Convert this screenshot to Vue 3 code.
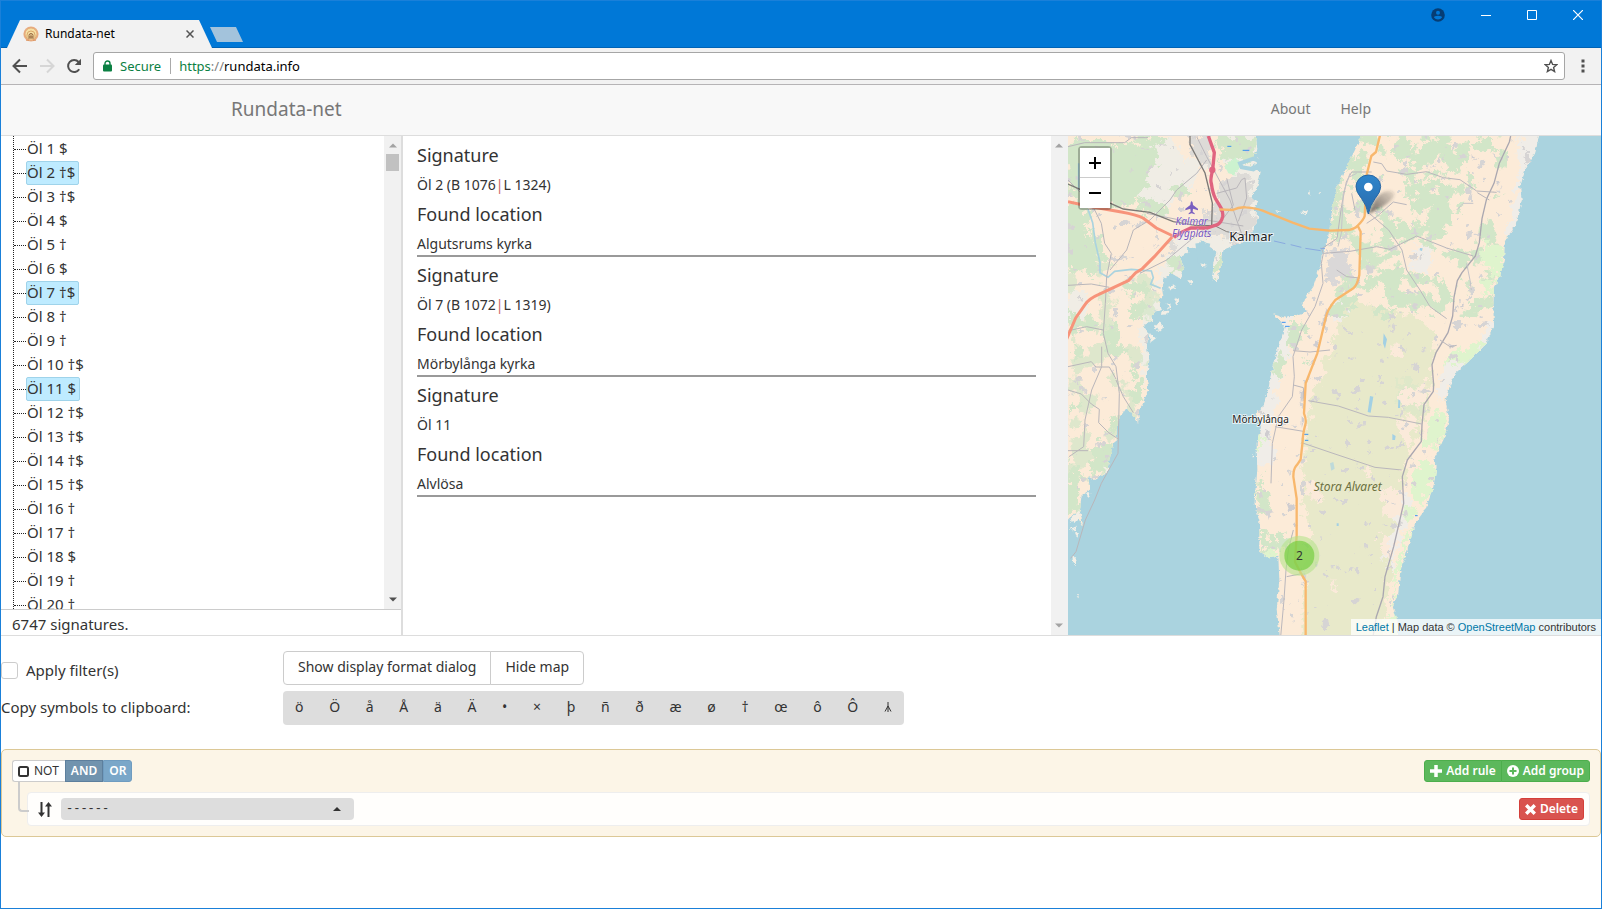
<script setup>
import { ref } from 'vue'

const marks = ['$', '†$', '†$', '$', '†', '$', '†$', '†', '†', '†$', '$', '†$', '†$', '†$', '†$', '†', '†', '$', '†', '†']
const chosen = ref([2, 7, 11])
const signatures = marks.map((mark, i) => ({ id: i + 1, label: `Öl ${i + 1} ${mark}` }))

const records = [
  { signature: 'Öl 2 (B 1076', alias: 'L 1324)', place: 'Algutsrums kyrka' },
  { signature: 'Öl 7 (B 1072', alias: 'L 1319)', place: 'Mörbylånga kyrka' },
  { signature: 'Öl 11', alias: '', place: 'Alvlösa' }
]

const symbols = ['ö', 'Ö', 'å', 'Å', 'ä', 'Ä', '•', '×', 'þ', 'ñ', 'ð', 'æ', 'ø', '†', 'œ', 'ô', 'Ô']
const applyFilters = ref(false)
const field = ref('')

function toggle(id) {
  chosen.value = chosen.value.includes(id) ? chosen.value.filter((n) => n !== id) : [...chosen.value, id]
}
</script>

<template>
  <div class="window">
    <header class="titlebar">
      <div class="tab">
        <svg class="favicon" viewBox="0 0 16 16" aria-hidden="true">
          <circle cx="8" cy="8" r="7.600" fill="#e9ae82" />
          <circle cx="8" cy="8" r="6" fill="#f6e0a4" stroke="#dfa070" stroke-width=".7" />
          <path d="M4 12.500V9a4 4 0 0 1 8 0v3.500" fill="none" stroke="#d9a86c" stroke-width="1" />
          <path d="M6 13v-3.500a2 2 0 0 1 4 0V13M8 8.500V13M6 11h4" fill="none" stroke="#94643c" stroke-width="1" />
          <path d="M3 14.200h3M10 14.200h3" stroke="#d9925f" />
        </svg>
        <span class="tab-title">Rundata-net</span>
        <button class="plain tab-close" aria-label="Close tab">
          <svg width="8" height="8" viewBox="0 0 8 8"><path d="M.5 .5l7 7M7.500 .5l-7 7" stroke="#555" stroke-width="1.500" /></svg>
        </button>
      </div>
      <button class="plain new-tab" aria-label="New tab"></button>
      <div class="window-controls">
        <button class="plain profile" aria-label="Profile">
          <svg width="14" height="14" viewBox="0 0 14 14"><circle cx="7" cy="7" r="6.800" fill="#063d74" /><circle cx="7" cy="4.700" r="2" fill="#0078d7" /><path d="M3 9.500q0-1.700 4-1.700t4 1.700Q9.500 11.500 7 11.500T3 9.500" fill="#0078d7" /></svg>
        </button>
        <button class="plain" aria-label="Minimize">
          <svg width="10" height="10" viewBox="0 0 10 10"><path d="M0 5.500h10" stroke="#fff" /></svg>
        </button>
        <button class="plain" aria-label="Maximize">
          <svg width="10" height="10" viewBox="0 0 10 10"><path d="M.5 .5h9v9h-9z" fill="none" stroke="#fff" /></svg>
        </button>
        <button class="plain" aria-label="Close">
          <svg width="10" height="10" viewBox="0 0 10 10"><path d="M0 0l10 10M10 0L0 10" stroke="#fff" stroke-width="1.200" /></svg>
        </button>
      </div>
    </header>

    <div class="toolbar">
      <button class="plain" aria-label="Back">
        <svg width="16" height="16" viewBox="0 0 16 16"><path d="M15 8H2M8 1.500L1.500 8 8 14.500" fill="none" stroke="#505050" stroke-width="2" /></svg>
      </button>
      <button class="plain" aria-label="Forward">
        <svg width="16" height="16" viewBox="0 0 16 16"><path d="M1 8h13M8 1.500L14.500 8 8 14.500" fill="none" stroke="#d6d6d6" stroke-width="2" /></svg>
      </button>
      <button class="plain" aria-label="Reload">
        <svg width="16" height="16" viewBox="0 0 16 16"><path d="M13.200 11.200A6 6 0 1 1 12.600 4" fill="none" stroke="#505050" stroke-width="2" /><path d="M15 .8v6.200H8.800z" fill="#505050" /></svg>
      </button>
      <div class="omnibox">
        <svg width="9" height="12" viewBox="0 0 9 12" aria-hidden="true"><path d="M2 5V3.500a2.500 2.500 0 0 1 5 0V5" fill="none" stroke="#0b8043" stroke-width="1.400" /><rect y="4.500" width="9" height="7" rx="1" fill="#0b8043" /></svg>
        <span class="secure">Secure</span>
        <span class="url"><span class="scheme">https</span><span class="slashes">://</span>rundata.info</span>
        <button class="plain star" aria-label="Bookmark this page">
          <svg width="14" height="14" viewBox="0 0 14 14"><path d="M7 1.500l1.600 3.900 4.200.3-3.200 2.700 1 4.100L7 10.300l-3.600 2.200 1-4.100L1.200 5.700l4.200-.3z" fill="none" stroke="#505050" stroke-width="1.400" /></svg>
        </button>
      </div>
      <button class="plain" aria-label="Menu">
        <svg width="4" height="14" viewBox="0 0 4 14"><path d="M.5 .5h3v3h-3zM.5 5.500h3v3h-3zM.5 10.500h3v3h-3z" fill="#505050" /></svg>
      </button>
    </div>

    <nav class="navbar">
      <div class="container">
        <a class="brand" href="#">Rundata-net</a>
        <a class="nav-link" href="#about">About</a>
        <a class="nav-link" href="#help">Help</a>
      </div>
    </nav>

    <main>
      <section class="panels">
        <div class="tree-panel">
          <div class="scroll-view">
            <ul class="tree">
              <li v-for="s in signatures" :key="s.id">
                <button class="plain node" :class="{ selected: chosen.includes(s.id) }" @click="toggle(s.id)">{{ s.label }}</button>
              </li>
            </ul>
            <div class="scrollbar" aria-hidden="true">
              <svg width="8" height="5" viewBox="0 0 8 5"><path d="M0 4.500L4 .5l4 4z" fill="#a3a3a3" /></svg>
              <span class="thumb"></span>
              <svg class="down" width="8" height="5" viewBox="0 0 8 5"><path d="M0 .5h8l-4 4z" fill="#505050" /></svg>
            </div>
          </div>
          <p class="status">6747 signatures.</p>
        </div>

        <div class="details-panel">
          <div class="records">
            <article v-for="r in records" :key="r.place" class="record">
              <h4>Signature</h4>
              <p>{{ r.signature }}<template v-if="r.alias"><span class="bar">|</span>{{ r.alias }}</template></p>
              <h4>Found location</h4>
              <p>{{ r.place }}</p>
            </article>
          </div>
          <div class="scrollbar" aria-hidden="true">
            <svg width="8" height="5" viewBox="0 0 8 5"><path d="M0 4.500L4 .5l4 4z" fill="#a3a3a3" /></svg>
            <svg class="down" width="8" height="5" viewBox="0 0 8 5"><path d="M0 .5h8l-4 4z" fill="#a3a3a3" /></svg>
          </div>
        </div>

        <div class="map">
          <svg class="tiles" viewBox="144 18 1600 1497" preserveAspectRatio="xMidYMid slice" role="img" aria-label="Map of Kalmar and southern Öland">
            <defs>
              <filter id="coast" x="-5%" y="-5%" width="110%" height="110%">
                <feTurbulence type="fractalNoise" baseFrequency=".09" numOctaves="3" seed="4" />
                <feDisplacementMap in="SourceGraphic" scale="13" xChannelSelector="R" yChannelSelector="G" />
              </filter>
              <filter id="patch" x="-5%" y="-5%" width="110%" height="110%">
                <feTurbulence type="fractalNoise" baseFrequency=".04" numOctaves="4" seed="9" />
                <feDisplacementMap in="SourceGraphic" scale="60" xChannelSelector="R" yChannelSelector="G" />
              </filter>
              <filter id="woods" x="0" y="0" width="100%" height="100%" color-interpolation-filters="sRGB">
                <feTurbulence type="fractalNoise" baseFrequency=".014" numOctaves="5" seed="12" />
                <feColorMatrix values="0 0 0 0 .824  0 0 0 0 .902  0 0 0 0 .784  30 0 0 0 -17.300" />
              </filter>
              <filter id="clearings" x="0" y="0" width="100%" height="100%" color-interpolation-filters="sRGB">
                <feTurbulence type="fractalNoise" baseFrequency=".022" numOctaves="4" seed="31" />
                <feColorMatrix values="0 0 0 0 .988  0 0 0 0 .922  0 0 0 0 .847  30 0 0 0 -17.500" />
              </filter>
              <filter id="hamlets" x="0" y="0" width="100%" height="100%" color-interpolation-filters="sRGB">
                <feTurbulence type="fractalNoise" baseFrequency=".03" numOctaves="3" seed="5" />
                <feColorMatrix values="0 0 0 0 .84  0 0 0 0 .83  0 0 0 0 .83  30 0 0 0 -21" />
              </filter>
              <filter id="soft"><feGaussianBlur stdDeviation="5" /></filter>
              <linearGradient id="pin" x1="0" y1="0" x2="0" y2="1"><stop offset="0" stop-color="#2e85cb" /><stop offset="1" stop-color="#2a6bac" /></linearGradient>
              <linearGradient id="shade" x1="0" y1="1" x2="1" y2="0"><stop offset="0" stop-color="#333" stop-opacity=".75" /><stop offset="1" stop-color="#333" stop-opacity=".1" /></linearGradient>
              <clipPath id="mainland"><path d="M130 0H705L712 60 700 80 720 90 690 112 722 125 712 170 690 200 715 215 700 240 718 260 700 300 690 322 660 338 630 350 610 360 605 400 590 455 578 445 580 400 590 365 570 350 545 330 530 355 500 350 505 370 480 380 490 410 480 445 455 430 430 445 425 470 430 500 415 510 425 540 400 545 395 570 372 590 385 610 380 650 388 690 380 740 385 780 365 830 357 840 355 878 320 830 300 860 290 900 292 930 280 940 270 980 260 1030 225 1050 205 1040 210 1080 185 1095 180 1140 190 1190 165 1150 130 1180z" /></clipPath>
              <clipPath id="island"><path d="M1025 0L1022 18 1005 60 990 90 970 130 950 175 940 220 932 270 925 320 915 350 900 410 880 470 845 520 860 545 830 555 800 565 760 553 795 590 780 640 760 700 750 750 745 780 730 830 705 850 725 880 710 940 712 1020 703 1120 718 1170 718 1265 745 1285 775 1280 778 1350 770 1440 782 1540H1135L1132 1470 1118 1430 1135 1390 1140 1330 1165 1250 1185 1180 1215 1140 1240 1070 1250 1010 1240 990 1270 930 1287 870 1277 810 1295 750 1305 730 1340 700 1390 650 1422 590 1420 530 1422 470 1440 440 1452 390 1455 330 1485 290 1505 210 1500 170 1515 120 1545 70 1560 0z" /></clipPath>
            </defs>
            <rect x="-400" y="-400" width="2800" height="2400" fill="#aad3df" />

            <!-- mainland -->
            <g filter="url(#coast)">
              <g clip-path="url(#mainland)">
                <rect x="120" width="620" height="1250" fill="#fcebd8" />
                <g fill="#f0ede5" filter="url(#patch)">
                  <path d="M395 20h60l35 70 60 10-30 60-60 50-40 60-50-30-20-50 40-80z" />
                  <path d="M610 0h120v360H600l40-120z" />
                  <path d="M460 320h150l-10 130H430l-20 60-10-40z" />
                  <path d="M370 520h70l-30 150-30 100-20-100z" />
                  <path d="M150 480l60 20-20 60-60 10z" />
                </g>
                <rect x="120" y="400" width="300" height="850" filter="url(#woods)" opacity=".7" />
                <g fill="#d2e6c8" filter="url(#patch)">
                  <path d="M130 50L190 22 255 45 330 38 400 48 420 90 380 130 385 165 350 190 330 235 285 230 240 215 180 240 150 185z" />
                  <path d="M340 20l60-4 40 8-20 20-60 4z" />
                  <path d="M130 235l60-15 18 40-8 40 26 60 20 60-20 20-40-20-60 10z" />
                  <path d="M210 300l30 16 20 70-20 8-20-40z" />
                  <path d="M350 200l60 10 40 22-20 22-60-4z" />
                  <path d="M440 180l50-20 20 20-30 30z" />
                  <path d="M590 20l110 0 14 60-30 20-40-12-40 8z" />
                  <path d="M130 540l50 20 50 10 12 22-50 10-60-14z" />
                  <path d="M255 570l30 20 25 60-10 30-30-10-20-45z" />
                  <path d="M310 460l50-8 34 20-14 20-70 5z" />
                  <path d="M340 510l44 14-24 44-24-14z" />
                  <path d="M160 640l20 10 6 30-22 8z" />
                  <path d="M340 690l18 4-10 56-12-10z" />
                  <path d="M355 740l22 20-24 60-20-10z" />
                  <path d="M290 850l10 40-30 20-10-30z" />
                  <path d="M240 930l50 10-14 80-66 20 10-70z" />
                  <path d="M150 990l40 50-20 70-40 20z" />
                  <path d="M150 1100l30 20-4 26-40 6z" />
                  <path d="M430 400l60-20 10 24-40 24z" />
                  <path d="M590 380l20-20-8 66-20 20z" />
                  <path d="M144 830l40-4 4 14-44 8z" />
                </g>
                <path d="M615 110l30-30 18 24-18 30-20-4z" fill="#ccf2cf" />
                <g fill="#dddbd7" filter="url(#patch)">
                  <path d="M512 18l50 4 10 60-12 50-20-40-20-14z" />
                  <path d="M590 180l30-35 55-10 22 45-6 60 20 40-40 50-40 10-40-40-20-60 20-10z" />
                  <path d="M545 240l40 20 20 50-30 10-30-20z" />
                  <path d="M430 360l40-30 14 6-40 44z" />
                </g>
                <rect x="120" width="600" height="1250" filter="url(#hamlets)" />
              </g>
              <g fill="#f3efe6">
                <path d="M405 590l16-16 8 20-14 12zM425 545l20-4-2 12-20 2zM468 505l10 4-6 14-9-4zM445 470l20-4 3 8-20 5zM505 450l12 2-3 13zM388 610l20 15-16 12zM440 520l12 4-4 16z" />
                <path d="M148 1170l30-30 4 18-20 22zM150 1195l22-6-8 16zM165 1210l12-2-5 12zM158 1275l12 14-3 20-9-12zM195 1090l16 0-3 12zM250 1010l20 4-8 14zM170 1396l7 0-2 6z" />
                <path d="M765 240l15 2-4 6zM840 246l24-4-6 14-12-6zM862 190l8-6-2 10zM895 188l9-2-4 7zM540 400l20 5-8 8zM695 225l8 4-8 6zM697 975l8 3-6 6z" />
              </g>
            </g>
            <g fill="none" stroke="#aad3df" stroke-width="5">
              <path d="M204 238l14 40 8 60 14 60 0 30 24 14 20-18 50-6 60 5 6 20-8 20 30 12M176 100v80" />
              <path d="M660 100l40-14 30 12-30 20-35-6zM540 400l-8-60M555 380l10-40" stroke-width="12" />
            </g>
            <g fill="none" stroke="#b9b6ba" stroke-width="3">
              <path d="M144 150l70 70 30 60 10 60 20 30-14 70-4 80-6 90 14 60 24 40 10 80-4 180-50 90-20 50-28 60-28 95-16 20" />
              <path d="M144 466l70-4 54 10M250 600l-50-10-54 12M144 710l70-15 14 16 40 0 20 36M245 650v60l-30 70-20 90-4 80-44 30M144 780l40 12 30 30 24 16-2 40 30 30 30 20M144 962h60M288 750l22 50 30 48" />
              <path d="M270 420l50-60 20-60 50-30 60-60 20-30 60-50 30-40M360 430l80-40 60-50 60-50 40-10M380 250l130 26 60-4 100 16" />
              <path d="M560 80l70 130 20 60 18 50M590 190l60-16 15-25 10-5 5 60-25 70M620 145l20 80-30 40M530 20l30 60" />
              <path d="M144 50l50-12 120 0 20-15h50" />
            </g>
            <path d="M144 162l50 22M260 215l50 22 80 10 70 28 70 12h60M510 18v26l45 85 22 90-2 70" fill="none" stroke="#7b7976" stroke-width="4" />
            <path d="M580 285l40 20 60 10" fill="none" stroke="#85827f" stroke-width="3" />
            <g fill="none" stroke="#f7937a" stroke-width="9" stroke-linejoin="round">
              <path d="M144 215l70 15 90 16q45 8 65 18l40 30 50 24-56 62-36 36-20 12-22 24-90 42q-28 12-40 30l-28 40-30 70-8 30-15 32" />
            </g>
            <path d="M565 18l18 50-5 52q-8 30-4 40 4 30 12 45l18 30q6 14 4 25-4 18-16 24l-30 10-50 0-30 14-20 14" fill="none" stroke="#e0647f" stroke-width="10" stroke-linejoin="round" />
            <circle cx="577" cy="120" r="7" fill="none" stroke="#e0647f" stroke-width="5" />
            <circle cx="605" cy="240" r="6" fill="#e0647f" />

            <!-- island -->
            <g filter="url(#coast)">
              <g clip-path="url(#island)">
                <rect x="690" width="900" height="1550" fill="#fcebd8" />
                <g fill="#f0ede8" filter="url(#patch)">
                  <path d="M1500 0h100v80l-60 100-10 100-50 60-20-10 30-160z" />
                  <path d="M740 600l60-40 20 60-30 100-40 180 10 100-60 20z" />
                  <path d="M1420 560l20 20-50 100-100 70-20 60-20-10 20-90 100-60z" />
                  <path d="M1110 1090l70 20-40 120-50 180-20-30 30-160z" />
                  <path d="M950 510l70 50-30 20-50-10zM1150 370l80-30 20 40-40 60-40-20z" />
                </g>
                <rect x="930" width="530" height="560" filter="url(#woods)" />
                <path d="M985 510L1100 540 1210 565 1250 620 1245 690 1225 750 1230 830 1205 890 1160 990 1150 1060 1100 1130 1130 1180 1090 1260 1110 1330 1090 1530 850 1540 850 1400 870 1200 850 1130 850 940 880 800 920 700 955 590z" fill="#e8e9ca" filter="url(#patch)" />
                <g fill="#d2e6c8" filter="url(#patch)">
                  <path d="M1190 20l120 0 40 60-30 40-70 20-60 0-20-50z" />
                  <path d="M1110 20l50 0 20 70-40 10-30-40z" />
                  <path d="M1150 160l70-10 80 10 40 60-40 60-50 30-60-20-20-60z" />
                  <path d="M1090 280l60-10 100 50-20 20-70-10-40 50-40-20-10-60z" />
                  <path d="M1080 420l60-10 40 20 100 20 20 50-40 50-90-20-50 0-30-40-60-30z" />
                  <path d="M1020 60l20 30-10 60 30 10-20 30-40-10 0-80z" />
                  <path d="M1340 130l30 10-14 50-20-10zM1350 30l60-10 14 40-40 10z" />
                  <path d="M940 490l60 0 20 40-50 10zM1065 530l50 10-20 24-26-6z" />
                  <path d="M1350 500l60 10-10 30-50-4zM1320 430l36 20-30 24z" />
                  <path d="M820 550l40 40-30 70-28-20zM780 660l20 40-28 50-16-20zM850 680l16 20-14 14z" />
                  <path d="M720 1030l30 80-10 60-28-20zM720 1180l40 60 40-40 0 50-60 20-20-30z" />
                  <path d="M1120 750l60-4 40 90-30 30-50-40z" opacity=".4" />
                  <path d="M950 120l20 20-14 90-20-10zM935 260l30 0-8 70-20-4z" />
                </g>
                <rect x="1060" y="18" width="300" height="500" filter="url(#clearings)" />
                <g fill="#dff4cd" filter="url(#patch)">
                  <path d="M1390 330l70 20-20 90-50-30z" />
                  <path d="M1385 450l46 0-6 40-40-4z" />
                  <path d="M1290 660l110-20-50 50-80 20z" />
                  <path d="M1255 830l30 40-30 80-50-10z" />
                  <path d="M1205 980l50 20-20 80-20 50-40-40 10-60z" />
                  <path d="M1150 1130l50 10-30 30-20-10zM1165 1200l16-10-50 170-16-10zM1100 1460l30-10 10 70h-40zM1120 1370l16 0-16 60z" />
                  <path d="M708 900l20 20-10 40-10-10zM735 1265l40 5-20 22-20-6z" />
                </g>
                <g fill="#fbeada" filter="url(#patch)">
                  <path d="M1140 780l80-10-10 60-70-20zM1150 850l40 20-30 80-20-40zM1120 640l30 20-10 30-22-10zM1025 1020l30 0-8 20zM870 1050l40 50-10 20-40-30zM1090 1080l60 0-10 90-50-10zM1080 1210l40 10-10 60-30-10zM940 1350l14 10-8 30z" />
                </g>
                <rect x="700" width="880" height="1540" filter="url(#hamlets)" />
                <g fill="#dad8d8" filter="url(#patch)">
                  <path d="M922 375l50-25 20 50-26 40-30 20-20-30z" />
                  <path d="M955 400l40 20 15 24-36-8z" />
                </g>
                <g fill="#cfcdd0">
                  <path d="M920 535l8 14-16 40-8-8zM885 630l14 6-6 18-14-8zM1010 440l12 20-16 8zM1425 150l16 4-8 14zM1300 540l10-16 2 24z" />
                  <path d="M1355 70l14 20-14-4zM1320 530l12-10-4 18zM800 1120l24 8-2 14-14 2zM735 900l14 6-8 22zM820 1180l14 6-10 10zM1285 640l20 10-16 6zM842 780l10 14-10 26zM845 860l8 10-8 24zM1150 1060l14-6-4 20zM865 1050l10 4-8 8zM892 1104l12 0-6 10zM1100 1270l12-14-4 24z" />
                </g>
              </g>
            </g>
            <g fill="#a2d0e4">
              <path d="M1091 610l10 18-6 28-6-16zM1050 798l10 2-8 48-9-2zM1135 808l6 4-1 22-6 0zM1117 912l10 6-2 12-8 0zM950 1180l6 0 0 8h-6zM1200 354l8 1-2 8-7-2z" />
              <path d="M930 1000l10-4 4 20-10 6z" opacity=".6" />
            </g>
            <path d="M785 577h12M795 589h14M852 913h13M855 931h10M622 49h12M668 61h20M1185 1157h8" fill="none" stroke="#3b92f0" stroke-width="3" />

            <g fill="none" stroke="#bab7bc" stroke-width="3" stroke-linejoin="round">
              <path d="M1472 18l-4 18-30 64-16 60-22 46-14 60-8 72-12 40-40 50-14 24-10 50-4 56-14 50-36 60-12 36 5 60-1 20-28 40-6 60-2 50-42 56-15 50 4 80-30 130-26 90-6 60-20 60-10 60" stroke="#aaa7b0" stroke-width="4" />
              <path d="M1060 96l25 5 15 22 60 10 60-8 50 18 50 6 50 34 60 4M1372 188l36 22M1360 378l-80-24-90-36-80 40-40-8-80 14-80 6-5-14 46-30 14-100 14-70 16-30 60 0M1040 280l30-20 50-44 40 8M1036 240l70 60 40 60 14 60 40 60 30 50 50 36M910 370l-6 30 5 60-24 70-40 70-26 80 4 60-6 60-42 60-18 80-4 120M950 420l30 20 40 4M995 190l10 50M930 660l-60 6-50-4M1260 630l30 20 20-4" />
              <path d="M865 812l90 16 90 30 60 4 100 20M845 938l100 34 120 40 80 8M820 765l30 8 2 40M765 890l85 14M820 1200l-15 60-7 60-6 90-10 110M800 1340l40-8" />
              <path d="M990 130l-20 60-6 120-10 40M1010 130l-20 10M1340 400l10 50 4 30M1310 240l20-20 30 0" stroke="#c5c3c8" />
            </g>
            <path d="M762 333l34 8M812 344l32 8M856 355l46 7M915 356l-14-1" fill="none" stroke="#89aae0" stroke-width="3" />
            <g fill="none" stroke="#f8b76c" stroke-width="7" stroke-linejoin="round">
              <path d="M598 238l40 2q20-10 40-8 30 2 50 10l90 36 50 18 60 6 60-2q20-6 24-12 20-20 22-30l3-60-3-40 20-80 14-12 12-50" />
              <path d="M1012 285l10 20-4 130q-6 30-18 40l-54 35q-24 30-28 50l-26 110-35 90-5 90q8 20 4 34-8 30-8 50l-6 54q-10 16-14 20-8 10-8 32l10 66v110l-5 80 18 34 14 24v160l-28 78-8 40" />
            </g>

            <g transform="translate(515 232)" fill="#7a5fc0"><path d="M0-19q4 3 4 12l15 11v5L4 4l-1 9 6 5v3L0 18l-9 3v-3l6-5-1-9-15 5V4l15-11q0-9 4-12z" /></g>
            <g class="halo airport" text-anchor="middle"><text x="515" y="284">Kalmar</text><text x="515" y="320">Flygplats</text></g>
            <text class="halo city" x="628" y="334">Kalmar</text>
            <text class="halo town" x="637" y="878">Mörbylånga</text>
            <text class="area" x="881" y="1082">Stora Alvaret</text>

            <path d="M1045 252l20-44q20-26 44-26 22 4 10 22-16 22-74 48z" fill="url(#shade)" filter="url(#soft)" />
            <path d="M1045 252q-5-26-20-46-17-20-17-36a37 35 0 0 1 74 0q0 16-17 36-15 20-20 46z" fill="url(#pin)" stroke="#2867a5" stroke-width="3" />
            <circle cx="1045" cy="171" r="13" fill="#fff" />
            <circle cx="838" cy="1277" r="60" fill="#b5e28c" opacity=".6" />
            <circle cx="838" cy="1277" r="45" fill="#6ecc39" opacity=".65" />
            <text class="count" x="838" y="1290" text-anchor="middle">2</text>
          </svg>
          <div class="zoom">
            <button class="plain" aria-label="Zoom in"><svg width="12" height="12" viewBox="0 0 12 12"><path d="M0 6h12M6 0v12" stroke="#000" stroke-width="2" /></svg></button>
            <button class="plain" aria-label="Zoom out"><svg width="12" height="12" viewBox="0 0 12 12"><path d="M0 6h12" stroke="#000" stroke-width="2" /></svg></button>
          </div>
          <div class="attribution"><a href="#leaflet">Leaflet</a> | Map data © <a href="#osm">OpenStreetMap</a> contributors</div>
        </div>
      </section>

      <section class="options">
        <label class="check"><input v-model="applyFilters" type="checkbox" />Apply filter(s)</label>
        <div class="button-group">
          <button>Show display format dialog</button>
          <button>Hide map</button>
        </div>
        <span class="caption">Copy symbols to clipboard:</span>
        <div class="symbols">
          <button v-for="s in symbols" :key="s" class="plain">{{ s }}</button>
          <button class="plain" aria-label="Rune yr"><svg width="8" height="12" viewBox="0 0 8 12"><path d="M4 1v10M4 5L1 10.500M4 5l3 5.500" fill="none" stroke="#333" /></svg></button>
        </div>
      </section>

      <section class="builder">
        <div class="group-head">
          <div class="conditions">
            <button class="not"><svg width="11" height="11" viewBox="0 0 11 11"><rect x="1" y="1" width="9" height="9" rx="1.500" fill="none" stroke="#333" stroke-width="2" /></svg>NOT</button>
            <button class="cond active">AND</button>
            <button class="cond">OR</button>
          </div>
          <div class="adders">
            <button class="add"><svg width="12" height="12" viewBox="0 0 12 12"><path d="M0 6h12M6 0v12" stroke="#fff" stroke-width="3.500" /></svg>Add rule</button>
            <button class="add"><svg width="12" height="12" viewBox="0 0 12 12"><circle cx="6" cy="6" r="6" fill="#fff" /><path d="M2.500 6h7M6 2.500v7" stroke="#5cb85c" stroke-width="2" /></svg>Add group</button>
          </div>
        </div>
        <div class="rule">
          <svg width="14" height="15" viewBox="0 0 14 15" aria-hidden="true"><path d="M3.500 0v12M10.500 3v12" stroke="#333" stroke-width="2" /><path d="M0 10.500h7L3.500 15zM7 4.500h7L10.500 0z" fill="#333" /></svg>
          <div class="picker">
            <select v-model="field" aria-label="Rule field">
              <option value="">------</option>
              <option value="signature">Signature</option>
              <option value="location">Found location</option>
            </select>
            <svg width="8" height="4" viewBox="0 0 8 4" aria-hidden="true"><path d="M0 4l4-4 4 4z" fill="#333" /></svg>
          </div>
          <button class="delete"><svg width="11" height="11" viewBox="0 0 11 11"><path d="M1.200 1.200l8.600 8.600M9.800 1.200L1.200 9.800" stroke="#fff" stroke-width="3.400" /></svg>Delete</button>
        </div>
      </section>
    </main>
  </div>
</template>

<style>
body {
  margin: 0;
}
</style>

<style scoped>
* {
  box-sizing: border-box;
}
.window {
  min-height: 100vh;
  border: 1px solid #1a80d9;
  background: #fff;
  color: #333;
  font: 14px/20px "Noto Sans", "Open Sans", sans-serif;
}
button,
select,
input {
  font: inherit;
  color: inherit;
  margin: 0;
}
.plain {
  display: flex;
  align-items: center;
  justify-content: center;
  border: 0;
  padding: 0;
  background: none;
}
svg {
  display: block;
  flex: none;
}
a {
  text-decoration: none;
}

.titlebar {
  display: flex;
  align-items: flex-end;
  height: 47px;
  background: #0078d7;
  border-bottom: 1px solid #0063b5;
  font: 12px/16px "Noto Sans", sans-serif;
}
.tab {
  display: flex;
  align-items: center;
  width: 205px;
  height: 28px;
  margin: 0 0 -1px 6px;
  padding: 0 18px 0 16px;
  background: #f2f2f2;
  clip-path: polygon(13px 0, 192px 0, 205px 28px, 0 28px);
  color: #000;
}
.favicon {
  width: 16px;
  height: 16px;
}
.tab-title {
  flex: 1;
  padding-left: 6px;
}
.new-tab {
  width: 34px;
  height: 15px;
  margin: 0 0 5px -2px;
  background: #a3c3dc;
  clip-path: polygon(0 0, 26px 0, 33px 15px, 7px 15px);
}
.window-controls {
  display: flex;
  align-self: flex-start;
  margin-left: auto;
}
.window-controls button {
  width: 46px;
  height: 28px;
}
.window-controls .profile {
  width: 50px;
}
.toolbar {
  display: flex;
  align-items: center;
  gap: 11px;
  height: 37px;
  padding: 0 16px 0 11px;
  background: #f2f2f2;
  border-bottom: 1px solid #b6b4b6;
}
.omnibox {
  display: flex;
  align-items: center;
  flex: 1;
  height: 28px;
  margin-right: 5px;
  padding: 0 6px 0 9px;
  background: #fff;
  border: 1px solid #a6a6a6;
  border-radius: 3px;
  font-size: 13px;
  color: #000;
}
.secure {
  margin-left: 8px;
  padding-right: 9px;
  border-right: 1px solid #aaa;
  line-height: 16px;
}
.secure,
.scheme {
  color: #0b8043;
}
.url {
  padding-left: 8px;
}
.slashes {
  color: #808080;
}
.star {
  margin-left: auto;
}

.navbar {
  background: #f8f8f8;
  border-bottom: 1px solid #ddd;
}
.container {
  display: flex;
  align-items: center;
  max-width: 1170px;
  height: 50px;
  margin: 0 auto;
  padding: 0 15px 2px;
  gap: 30px;
}
.container a {
  color: #777;
}
.brand {
  flex: 1;
  font-size: 19px;
}

.panels {
  display: grid;
  grid-template-columns: 3fr 5fr 4fr;
  height: 500px;
  border-bottom: 1px solid #ddd;
}
.panels > div {
  min-width: 0;
  min-height: 0;
}
.tree-panel {
  display: flex;
  flex-direction: column;
  font-size: 15px;
}
.scroll-view {
  display: flex;
  flex: 1;
  min-height: 0;
  overflow: hidden;
  border-bottom: 1px solid #ccc;
}
.tree {
  flex: 1;
  list-style: none;
  margin: 0 0 0 12px;
  padding: 1px 0 0;
  border-left: 1px dotted #222;
}
.tree li {
  display: flex;
  align-items: center;
  height: 24px;
}
.tree li::before {
  content: "";
  width: 12px;
  border-top: 1px dotted #222;
}
.node {
  height: 24px;
  padding: 0 3px 2px 0;
  border: 1px solid transparent;
  border-radius: 2px;
}
.node.selected {
  background: #beebff;
  border-color: #9fd3ea;
}
.scrollbar {
  display: flex;
  flex-direction: column;
  align-items: center;
  width: 17px;
  padding: 7px 0;
  background: #f1f1f1;
}
.thumb {
  width: 13px;
  height: 17px;
  margin-top: 6px;
  background: #c1c1c1;
}
.down {
  margin-top: auto;
}
.status {
  margin: 0;
  padding: 4px 10px 1px 11px;
}
.details-panel {
  display: flex;
  border-left: 2px solid #ddd;
}
.records {
  flex: 1;
  padding: 9px 15px 0 14px;
}
.record {
  display: grid;
  gap: 10px;
  margin-bottom: 8px;
  padding-bottom: 2px;
  border-bottom: 2px solid #999;
}
.record h4 {
  margin: 0;
  font-size: 18px;
  font-weight: 400;
}
.record p {
  margin: 0;
  line-height: 19px;
}
.bar {
  color: #c66;
}
.map {
  position: relative;
  overflow: hidden;
}
.tiles {
  width: 100%;
  height: 100%;
}
.halo {
  paint-order: stroke;
  stroke: #fff;
  stroke-width: 6px;
  stroke-opacity: 0.7;
  fill: #222;
}
.airport {
  font-size: 30px;
  font-style: italic;
  stroke-width: 2px;
  fill: #7553bd;
}
.city {
  font-size: 39px;
}
.town {
  font-size: 30px;
}
.area {
  font-size: 36px;
  font-style: italic;
  fill: #6c7040;
}
.count {
  font-size: 36px;
  fill: #333;
}
.zoom {
  position: absolute;
  top: 10px;
  left: 10px;
  border: 2px solid rgba(0, 0, 0, 0.25);
  border-radius: 4px;
  background-clip: padding-box;
}
.zoom button {
  width: 30px;
  height: 30px;
  background: #fff;
}
.zoom button:first-child {
  border-bottom: 1px solid #ccc;
}
.attribution {
  position: absolute;
  right: 0;
  bottom: 0;
  padding: 1px 5px 0;
  background: rgba(255, 255, 255, 0.75);
  font: 11px/15px "Liberation Sans", Arial, sans-serif;
  white-space: nowrap;
}
.attribution a {
  color: #0078a8;
}

.options {
  display: grid;
  grid-template-columns: 282px max-content;
  align-items: center;
  row-gap: 6px;
  padding-top: 15px;
}
.check {
  display: flex;
  align-items: center;
  gap: 8px;
  padding-top: 4px;
  font-size: 15px;
}
.check input {
  appearance: none;
  width: 17px;
  height: 17px;
  border: 1px solid #ccc;
  border-radius: 3px;
  background: #fff;
}
.button-group {
  display: flex;
}
.button-group button {
  height: 34px;
  padding: 0 14px 2px;
  border: 1px solid #ccc;
  border-radius: 4px;
  background: #fff;
}
.button-group button:first-child {
  border-radius: 4px 0 0 4px;
}
.button-group button:last-child {
  margin-left: -1px;
  border-radius: 0 4px 4px 0;
}
.caption {
  padding-bottom: 2px;
  font-size: 15px;
}
.symbols {
  display: flex;
  justify-content: space-between;
  width: 621px;
  height: 34px;
  background: #ddd;
  border-radius: 4px;
}
.symbols button {
  padding: 0 12px 2px;
}

.builder {
  margin-top: 24px;
  padding: 10px;
  border: 1px solid #dcc896;
  border-radius: 5px;
  background: #fcf5e7;
  font-size: 12px;
}
.group-head,
.conditions,
.adders,
.rule {
  display: flex;
  align-items: center;
}
.group-head {
  justify-content: space-between;
  margin-bottom: 10px;
}
.builder button {
  display: flex;
  align-items: center;
  gap: 4px;
  height: 22px;
  padding: 0 5px;
  border: 1px solid #ccc;
  border-radius: 3px;
  font-weight: 600;
  color: #fff;
}
.conditions button:first-child,
.adders button:first-child {
  border-radius: 3px 0 0 3px;
}
.conditions button:last-child,
.adders button:last-child {
  border-radius: 0 3px 3px 0;
}
.builder .not {
  gap: 5px;
  padding-right: 6px;
  background: #fff;
  border-right: 0;
  color: #333;
  font-weight: 400;
}
.builder .cond {
  background: #7aa7c9;
  border-color: #6f9cc0;
}
.builder .cond.active {
  background: #7193ae;
  border-color: #5d7f9d;
  border-radius: 0;
}
.builder .add {
  background: #5cb85c;
  border-color: #4cae4c;
}
.adders .add:last-child {
  margin-left: -1px;
}
.rule {
  position: relative;
  margin-left: 15px;
  padding: 4px 5px 4px 10px;
  height: 34px;
  border: 1px solid #eee;
  border-radius: 4px;
  background: #fffefc;
}
.rule::before {
  content: "";
  position: absolute;
  left: -10px;
  top: -11px;
  width: 9px;
  height: 28px;
  border: solid #ccc;
  border-width: 0 0 2px 2px;
  border-radius: 0 0 0 4px;
}
.picker {
  position: relative;
  width: 293px;
  margin: 0 auto 0 9px;
}
.picker select {
  display: block;
  appearance: none;
  width: 100%;
  height: 22px;
  padding: 0 5px;
  border: 0;
  border-radius: 4px;
  background: #ddd;
  font: 12px/20px "Liberation Mono", monospace;
}
.picker svg {
  position: absolute;
  right: 13px;
  top: 9px;
}
.builder .delete {
  background: #d9534f;
  border-color: #d43f3a;
}
</style>
